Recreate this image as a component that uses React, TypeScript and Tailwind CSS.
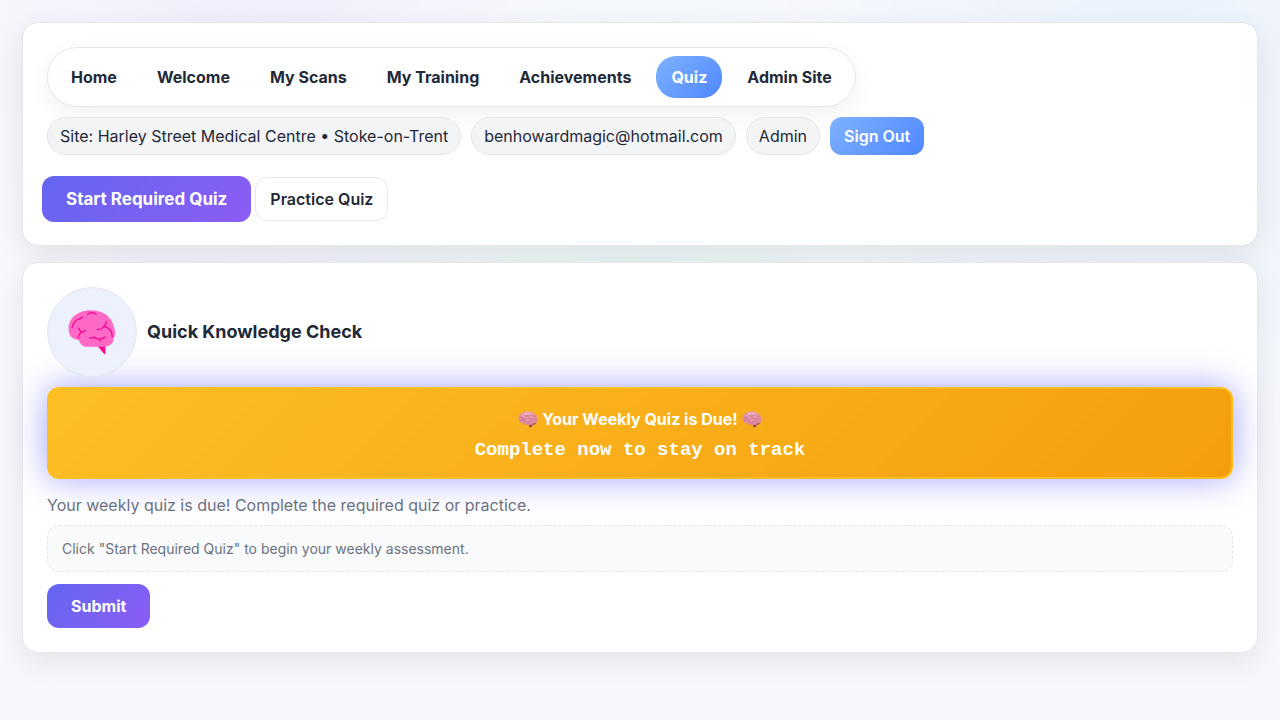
import React from "react";

const NAV_ITEMS = ["Home", "Welcome", "My Scans", "My Training", "Achievements", "Quiz", "Admin Site"];
const CHIPS = ["Site: Harley Street Medical Centre • Stoke-on-Trent", "benhowardmagic@hotmail.com", "Admin"];

const CARD =
  "rounded-2xl border border-[#e5e7eb] bg-white px-6 pt-6 shadow-[0_10px_30px_rgba(0,0,0,0.08)]";

function BrainBadge() {
  return (
    <svg viewBox="2 2 138 128" className="h-[44px] w-[48px]" aria-hidden="true">
      <path d="M87 107h23v21q-1 3-4 1z" fill="#f40b93" />
      <path
        d="M3 58C1 29 27 3 68 3c36 0 61 20 66 47 6 13 5 27 0 35 0 15-13 24-29 24H58c-13 0-23-8-25-20C15 88 3 78 3 58Z"
        fill="#ff6ac6"
      />
      <g fill="none" stroke="#f40b93" strokeWidth="4" strokeLinecap="round" strokeLinejoin="round">
        <path d="M13 54q4-20 20-26 8-2 11-5" />
        <path d="M58 15q4-5 12-5t13 4" />
        <path d="M31 83q1-8 7-15M32 55q2 9 10 11 5 0 10-5" />
        <path d="M86 59q12 0 19-8 7-6 8-16M105 50q24 4 25 29" />
        <path d="M64 84q12-4 24 2 11 2 21-5M77 80q1 4 7 5M92 86q0 5 5 6" />
      </g>
    </svg>
  );
}

function BrainGlyph() {
  return (
    <svg viewBox="0 0 60 52" className="h-[17px] w-5" aria-hidden="true">
      <path d="M30 39 45 38q-1 9-6 12-4 2-5-3Z" fill="#8c4a51" />
      <path d="M36 35q10-5 21-5-2 14-16 14Z" fill="#b65c70" />
      <path
        d="M1 24C0 12 12 2 29 1c17 0 29 11 30 24 1 8-5 12-14 12-3 6-10 7-15 4-8 3-14 1-16-4C6 38 1 32 1 24Z"
        fill="#e08fa2"
      />
      <path d="M8 16Q17 4 30 4q14 0 21 10-13-5-24-2-11 0-19 4Z" fill="#f6bbc7" />
      <g fill="none" stroke="#c46f87" strokeWidth="1.5" strokeLinecap="round">
        <path d="M6 20q5-2 7 3 5-2 8 2M15 11q7-1 8 5 6-3 10 1M29 6q-2 5 3 8M37 5q-1 6 5 8M44 10q5 1 8 8" />
        <path d="M5 30q6-5 11 0 5 1 9-3M18 36q6-6 13-4 7 1 11-5M32 23q6-3 11 1 6-2 11 3M26 39q4-4 9-2M9 26q5-3 10 1" />
      </g>
      <path d="M16 19q5-3 9 2M34 18q6-3 10 2M24 30q5-2 8-1" fill="none" stroke="#ffc2ce" strokeWidth="1.5" />
    </svg>
  );
}

export default function App() {
  return (
    <div className="min-h-screen bg-[#f6f8fc] bg-[radial-gradient(circle_at_20%_10%,rgba(167,139,250,0.10),transparent_300px),radial-gradient(circle_at_90%_10%,rgba(96,165,250,0.08),transparent_380px),radial-gradient(circle_at_50%_40%,rgba(52,211,153,0.05),transparent_340px)] p-[22px] font-['Inter',sans-serif] text-base text-[#1f2937]">
      <main className="flex flex-col gap-4">
        <header className={`${CARD} pb-[23px]`}>
          <div className="flex flex-col items-start gap-[10px]">
            <nav className="flex flex-wrap items-center gap-[10px] rounded-[30px] border border-[#e5e7eb] bg-white p-2 shadow-[0_8px_24px_rgba(0,0,0,0.06)]">
              {NAV_ITEMS.map((item) => (
                <a
                  key={item}
                  href="#"
                  aria-current={item === "Quiz" ? "page" : undefined}
                  className={
                    item === "Quiz"
                      ? "rounded-[20px] bg-linear-135 from-[#7fb2ff] to-[#4f86ff] px-[15px] py-2 leading-[26px] font-bold text-white"
                      : "rounded-[20px] px-[15px] py-2 leading-[26px] font-bold"
                  }
                >
                  {item}
                </a>
              ))}
            </nav>
            <div className="flex flex-wrap items-center gap-[10px]">
              {CHIPS.map((chip) => (
                <span
                  key={chip}
                  className="rounded-full border border-[#e5e7eb] bg-[#f3f4f6] px-3 py-[6px] leading-6"
                >
                  {chip}
                </span>
              ))}
              <button
                type="button"
                className="rounded-xl bg-linear-135 from-[#7fb2ff] to-[#4f86ff] px-[14px] py-[7px] leading-6 font-semibold text-white"
              >
                Sign Out
              </button>
            </div>
          </div>
          <div className="-mx-[5px] mt-[21px] flex flex-wrap items-center gap-1">
            <button
              type="button"
              className="rounded-xl bg-linear-135 from-[#6366f1] to-[#8b5cf6] px-6 py-[11px] text-[17px] leading-6 font-bold text-white"
            >
              Start Required Quiz
            </button>
            <button
              type="button"
              className="rounded-xl border border-[#e5e7eb] bg-white px-[14px] py-[9px] leading-6 font-semibold"
            >
              Practice Quiz
            </button>
          </div>
        </header>

        <section className={`${CARD} pb-6`}>
          <div className="flex items-center gap-[10px]">
            <div className="flex size-[90px] items-center justify-center rounded-full border border-[#e5e7eb] bg-[#edf1fe]">
              <BrainBadge />
            </div>
            <h1 className="text-lg leading-[30px] font-bold">Quick Knowledge Check</h1>
          </div>

          <div
            role="status"
            className="mt-[10px] flex flex-col items-center gap-[6px] rounded-xl border-2 border-[#fbbf24] bg-linear-135 from-[#fbbf24] to-[#f59e0b] pt-[17px] pb-[15px] font-bold text-white shadow-[0_0_34px_rgba(99,102,241,0.6)]"
          >
            <p className="flex items-center gap-1 leading-[26px]">
              <BrainGlyph />
              Your Weekly Quiz is Due!
              <BrainGlyph />
            </p>
            <p className="font-['Courier_New','Liberation_Mono',monospace] text-[19px] leading-6">
              Complete now to stay on track
            </p>
          </div>

          <p className="mt-[13px] leading-[26px] text-[#6b7280]">
            Your weekly quiz is due! Complete the required quiz or practice.
          </p>
          <p className="mt-[7px] rounded-xl border border-dashed border-[#e5e7eb] bg-[#f9fafb] px-[14px] py-3 text-sm leading-[21px] text-[#6b7280]">
            Click "Start Required Quiz" to begin your weekly assessment.
          </p>
          <button
            type="button"
            className="mt-3 block rounded-xl bg-linear-135 from-[#6366f1] to-[#8b5cf6] px-6 py-[10px] leading-6 font-bold text-white"
          >
            Submit
          </button>
        </section>
      </main>
    </div>
  );
}
